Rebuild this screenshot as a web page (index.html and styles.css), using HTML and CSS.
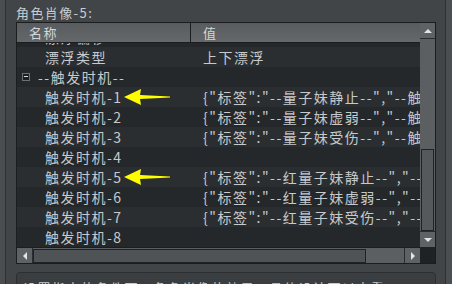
FILE: index.html
```html
<!DOCTYPE html>
<html lang="zh">
<head>
  <meta charset="UTF-8">
  <title>角色肖像</title>
  <link rel="stylesheet" href="styles.css">
</head>
<body>
  <div class="panel">
    <div class="caption">角色肖像-5:</div>
    <div class="grid">
      <div class="view">
        <div class="head">
          <div class="hc hc-name">名称</div>
          <div class="hc hc-val">值</div>
        </div>
        <div class="body">
          <div class="rows">
            <div class="row dark"><div class="c1">漂浮偏移</div><div class="c2">0</div></div>
            <div class="row"><div class="c1">漂浮类型</div><div class="c2">上下漂浮</div></div>
            <div class="row dark cat"><div class="c1"><span class="tog"></span>--触发时机--</div><div class="c2"></div></div>
            <div class="row">
              <div class="c1">触发时机-1
                <svg class="arrow" viewBox="0 0 46 16"><polygon points="0,8 17,0 16,6 46,7.4 46,8.6 16,10 17,16"/></svg>
              </div>
              <div class="c2">{"标签":"--量子妹静止--","--触发条件--"}</div>
            </div>
            <div class="row dark"><div class="c1">触发时机-2</div><div class="c2">{"标签":"--量子妹虚弱--","--触发条件--"}</div></div>
            <div class="row"><div class="c1">触发时机-3</div><div class="c2">{"标签":"--量子妹受伤--","--触发条件--"}</div></div>
            <div class="row dark"><div class="c1">触发时机-4</div><div class="c2"></div></div>
            <div class="row">
              <div class="c1">触发时机-5
                <svg class="arrow" viewBox="0 0 46 16"><polygon points="0,8 17,0 16,6 46,7.4 46,8.6 16,10 17,16"/></svg>
              </div>
              <div class="c2">{"标签":"--红量子妹静止--","--触发条件--"}</div>
            </div>
            <div class="row dark"><div class="c1">触发时机-6</div><div class="c2">{"标签":"--红量子妹虚弱--","--触发条件--"}</div></div>
            <div class="row"><div class="c1">触发时机-7</div><div class="c2">{"标签":"--红量子妹受伤--","--触发条件--"}</div></div>
            <div class="row dark"><div class="c1">触发时机-8</div><div class="c2"></div></div>
          </div>
        </div>
      </div>

      <div class="vscroll">
        <div class="sbtn up"><span class="tri tri-up"></span></div>
        <div class="vtrack"><div class="vthumb"></div></div>
        <div class="sbtn down"><span class="tri tri-down"></span></div>
      </div>

      <div class="hscroll">
        <div class="sbtn left"><span class="tri tri-left"></span></div>
        <div class="htrack"><div class="hthumb"></div></div>
        <div class="sbtn right"><span class="tri tri-right"></span></div>
      </div>

      <div class="corner"></div>
    </div>

    <div class="desc">设置指定的条件下，角色肖像的效果，具体设计可以查看</div>
  </div>
</body>
</html>
```

FILE: styles.css
```css
html, body {
  margin: 0;
  height: 100%;
  overflow: hidden;
}

body {
  background: #4a4e51;
  font-family: "Noto Sans CJK SC", "Noto Sans", sans-serif;
  color: #c6cacd;
}

.panel {
  margin-left: 5px;
  width: 441px;
  height: 100%;
  border-left: 1px solid #2e3134;
  border-right: 1px solid #2e3134;
  background: #414548;
  padding: 5px 0 0 10px;
  box-sizing: border-box;
}

.caption {
  font-size: 13px;
  line-height: 16px;
  letter-spacing: 1.4px;
  margin-bottom: 1px;
  color: #c9cdd0;
}

.grid {
  width: 420px;
  height: 242px;
  box-sizing: border-box;
  border: 1px solid #1b1d1f;
  display: grid;
  grid-template-columns: 403px 15px;
  grid-template-rows: 224px 16px;
}

.view {
  grid-column: 1;
  grid-row: 1;
  display: flex;
  flex-direction: column;
  overflow: hidden;
}

.head {
  display: flex;
  flex-shrink: 0;
  height: 20px;
  box-sizing: border-box;
  border-bottom: 1px solid #1b1d1f;
  background: linear-gradient(#585c5f, #64686b);
  font-size: 13px;
  line-height: 19px;
  letter-spacing: 1.5px;
  color: #d2d6d9;
}

.hc {
  padding-left: 12px;
  box-sizing: border-box;
}

.hc-name {
  width: 174px;
  border-right: 1px solid #1b1d1f;
}

.body {
  height: 204px;
  overflow: hidden;
}

.rows {
  margin-top: -16px;
}

.row {
  display: flex;
  height: 20px;
  background: #2b2e31;
  font-size: 14px;
  line-height: 20px;
  letter-spacing: 1.5px;
  white-space: nowrap;
}

.row.dark {
  background: #25282a;
}

.c1 {
  position: relative;
  flex-shrink: 0;
  width: 173px;
  padding-left: 28px;
  box-sizing: border-box;
}

.c2 {
  flex: 1;
  padding-left: 13px;
  overflow: hidden;
}

.cat .c1 {
  padding-left: 5px;
  display: flex;
  align-items: center;
}

.tog {
  flex-shrink: 0;
  width: 8px;
  height: 8px;
  box-sizing: border-box;
  border: 1px solid #6c7073;
  background: #1d1f21;
  margin-right: 8px;
  position: relative;
}

.tog::after {
  content: "";
  position: absolute;
  left: 1px;
  top: 2px;
  width: 4px;
  height: 1px;
  background: #d8dcdf;
}

.arrow {
  position: absolute;
  left: 107px;
  top: 2px;
  width: 46px;
  height: 16px;
  fill: #ffff00;
}

.vscroll {
  grid-column: 2;
  grid-row: 1;
  display: flex;
  flex-direction: column;
  background: #5b5f62;
}

.sbtn {
  display: flex;
  flex-shrink: 0;
  align-items: center;
  justify-content: center;
  background: #5e6265;
}

.sbtn.up {
  height: 15px;
  border-bottom: 1px solid #2a2d2f;
}

.sbtn.down {
  height: 15px;
  border-top: 1px solid #2a2d2f;
}

.vtrack {
  flex: 1;
  padding: 110px 1px 0 1px;
}

.vthumb {
  height: 80px;
  border: 1px solid #202224;
  background: #55595c;
}

.hscroll {
  grid-column: 1;
  grid-row: 2;
  display: flex;
  border-top: 1px solid #1b1d1f;
  background: #5b5f62;
}

.sbtn.left {
  width: 15px;
  border-right: 1px solid #2a2d2f;
}

.sbtn.right {
  width: 15px;
  border-left: 1px solid #2a2d2f;
}

.htrack {
  flex: 1;
  padding: 1px 38px 0 0;
}

.hthumb {
  height: 12px;
  border: 1px solid #202224;
  background: #4f5356;
}

.corner {
  grid-column: 2;
  grid-row: 2;
  background: #1f2123;
}

.tri {
  width: 0;
  height: 0;
  border: 4px solid transparent;
}

.tri-up {
  border-bottom-color: #e2e4e6;
  border-top-width: 0;
}

.tri-down {
  border-top-color: #e2e4e6;
  border-bottom-width: 0;
}

.tri-left {
  border-right-color: #e2e4e6;
  border-left-width: 0;
}

.tri-right {
  border-left-color: #e2e4e6;
  border-right-width: 0;
}

.desc {
  width: 420px;
  box-sizing: border-box;
  margin-top: 8px;
  border: 1px solid #2c2f32;
  border-radius: 4px;
  background: #3a3e41;
  padding: 6px 6px;
  font-size: 13px;
  line-height: 18px;
  letter-spacing: 1.5px;
  height: 60px;
}
```
